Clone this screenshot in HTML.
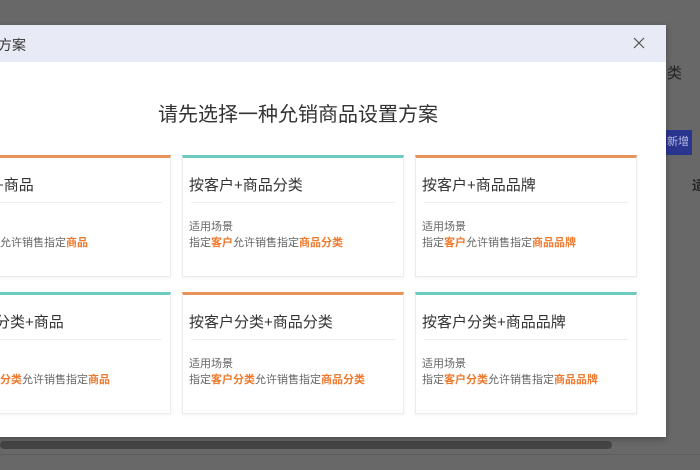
<!DOCTYPE html>
<html style="background:#686868"><head><meta charset="utf-8"><style>
*{margin:0;padding:0;box-sizing:border-box}
html,body{width:700px;height:470px;overflow:hidden}
body{background:#686868;font-family:"Liberation Sans","Noto Sans CJK SC",sans-serif;position:relative}
.cover{position:absolute;left:0;top:0;width:700px;height:470px;background:#686868}
.bg{position:absolute}
.dlg{position:absolute;left:-10px;top:25px;width:676px;height:412px;background:#fff;box-shadow:0 2px 6px rgba(0,0,0,.3);overflow:hidden}
.hd{height:37px;background:#e8ebf5;position:relative}
.hd span{position:absolute;left:8px;top:10px;font-size:14px;color:#333}
.x{position:absolute;right:20px;top:11px;width:14px;height:14px}
.ttl{position:absolute;top:73px;left:-140px;width:896px;text-align:center;font-size:20px;color:#333}
.card{position:absolute;width:222px;height:122px;background:#fff;border:1px solid #ececec;border-top:3px solid #e8935a;box-shadow:0 1px 3px rgba(0,0,0,.06);overflow:hidden}
.card.t{border-top-color:#6ccbbf}
.card h3{font-weight:normal;font-size:15px;color:#333;position:absolute;left:6px;top:16px;white-space:nowrap}
.card .ln{position:absolute;left:8px;right:8px;top:44px;border-top:1px solid #eee}
.card .s{position:absolute;left:6px;top:61px;font-size:11px;color:#666;white-space:nowrap;line-height:16px}
.o{color:#ee7b30;font-weight:bold}
</style></head><body>
<div class="cover"></div>
<div class="bg" style="left:667px;top:62px;font-size:15px;color:#222">类</div>
<div class="bg" style="left:664px;top:130px;width:28px;height:25px;background:#2a3590;color:#b8bde0;font-size:11px;line-height:25px;text-align:center">新增</div>
<div class="bg" style="left:692px;top:175px;font-size:13px;color:#222;font-weight:bold">适</div>
<div class="bg" style="left:0;top:441px;width:612px;height:8px;background:#444;border-radius:4px"></div>
<div class="bg" style="left:0;top:454px;width:700px;height:1px;background:#5d5d5d"></div>
<div class="dlg">
<div class="hd"><span>方案</span>
<svg class="x" viewBox="0 0 14 14"><path d="M2 2L12 12M12 2L2 12" stroke="#555" stroke-width="1.2"/></svg></div>
<div class="ttl">请先选择一种允销商品设置方案</div>
</div>
<div class="card" style="left:-51px;top:155px"><h3 style="left:0">按客户+商品</h3><div class="ln"></div><div class="s">适用场景<br>指定<span class="o">客户</span>允许销售指定<span class="o">商品</span></div></div>
<div class="card t" style="left:182px;top:155px"><h3>按客户+商品分类</h3><div class="ln"></div><div class="s">适用场景<br>指定<span class="o">客户</span>允许销售指定<span class="o">商品分类</span></div></div>
<div class="card" style="left:415px;top:155px"><h3>按客户+商品品牌</h3><div class="ln"></div><div class="s">适用场景<br>指定<span class="o">客户</span>允许销售指定<span class="o">商品品牌</span></div></div>
<div class="card t" style="left:-51px;top:292px"><h3 style="left:0">按客户分类+商品</h3><div class="ln"></div><div class="s">适用场景<br>指定<span class="o">客户分类</span>允许销售指定<span class="o">商品</span></div></div>
<div class="card" style="left:182px;top:292px"><h3>按客户分类+商品分类</h3><div class="ln"></div><div class="s">适用场景<br>指定<span class="o">客户分类</span>允许销售指定<span class="o">商品分类</span></div></div>
<div class="card t" style="left:415px;top:292px"><h3>按客户分类+商品品牌</h3><div class="ln"></div><div class="s">适用场景<br>指定<span class="o">客户分类</span>允许销售指定<span class="o">商品品牌</span></div></div>
</body></html>
